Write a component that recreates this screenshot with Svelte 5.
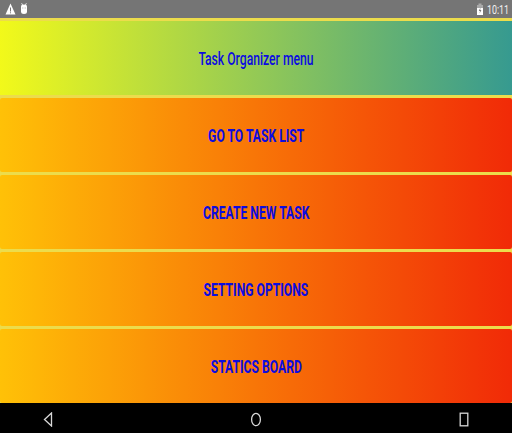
<script>
  const items = ['GO TO TASK LIST', 'CREATE NEW TASK', 'SETTING OPTIONS', 'STATICS BOARD'];
</script>

<div class="screen">
  <div class="status">
    <div class="status-left">
      <svg width="11" height="12" viewBox="0 0 11 12"><path d="M5.5 0.5 L10.5 11.5 H0.5 Z" fill="#fff" /><rect x="5" y="4.5" width="1" height="4" fill="#757575" /><rect x="5" y="9.3" width="1" height="1" fill="#757575" /></svg>
      <svg width="8" height="12" viewBox="0 0 8 12"><path d="M1 3.5 Q1 1.5 4 1.5 Q7 1.5 7 3.5 V8.5 Q7 11 4 11 Q1 11 1 8.5 Z" fill="#fff" /><path d="M1.6 0.2 L2.6 2 M6.4 0.2 L5.4 2" stroke="#fff" stroke-width="0.8" /><rect x="2.3" y="4.5" width="1" height="1" fill="#aaa" /><rect x="4.7" y="4.5" width="1" height="1" fill="#aaa" /></svg>
    </div>
    <div class="status-right">
      <svg width="6" height="12" viewBox="0 0 6 12"><rect x="0" y="2" width="6" height="10" fill="#fff" /><rect x="1.5" y="0.5" width="3" height="1.5" fill="#aaa" /><rect x="0" y="2" width="6" height="3" fill="#a8a8a8" /><path d="M3.4 4.5 L1.8 8 H3 L2.6 10.6 L4.4 7 H3.2 Z" fill="#757575" /></svg>
      <span class="time">10:11</span>
    </div>
  </div>

  <div class="menu">
    <div class="row header"><span>Task Organizer menu</span></div>
    {#each items as item}
      <button class="row action"><span>{item}</span></button>
    {/each}
  </div>

  <div class="nav">
    <svg width="10" height="15" viewBox="0 0 10 15"><path d="M8.5 1 L1.5 7.5 L8.5 14 Z" fill="none" stroke="#d8d8d8" stroke-width="1.3" /></svg>
    <svg width="12" height="15" viewBox="0 0 12 15"><ellipse cx="6" cy="7.5" rx="4.4" ry="6.2" fill="none" stroke="#d8d8d8" stroke-width="1.3" /></svg>
    <svg width="10" height="15" viewBox="0 0 10 15"><rect x="1.2" y="1.2" width="7.6" height="12.6" fill="none" stroke="#d8d8d8" stroke-width="1.3" /></svg>
  </div>
</div>

<style>
  :global(body) {
    margin: 0;
  }
  .screen {
    width: 512px;
    height: 433px;
    display: flex;
    flex-direction: column;
    overflow: hidden;
    font-family: Roboto, "Liberation Sans", sans-serif;
  }
  .status {
    height: 18px;
    flex: none;
    box-sizing: border-box;
    background: #757575;
    display: flex;
    justify-content: space-between;
    align-items: center;
    padding: 0 4px 0 5px;
  }
  .status-left,
  .status-right {
    display: flex;
    align-items: center;
    gap: 4px;
  }
  .time {
    color: #f2f2f2;
    font-size: 13px;
    display: inline-block;
    width: 21px;
    white-space: nowrap;
    transform: scaleX(0.68);
    transform-origin: left center;
  }
  .menu {
    flex: 1;
    display: flex;
    flex-direction: column;
    background: #ecdc4c;
    padding-top: 3px;
    gap: 3px;
  }
  .row {
    flex: 1;
    display: flex;
    align-items: center;
    justify-content: center;
    border: none;
    padding: 0;
    color: #0c0ce0;
    font-family: inherit;
    font-size: 19px;
    font-weight: 500;
  }
  .row span {
    display: inline-block;
    white-space: nowrap;
    transform: scaleX(0.64);
  }
  .header {
    background: linear-gradient(to right, #f2f91a, #369a90);
  }
  .action {
    background: linear-gradient(to right, #ffc107, #f12a07);
    font-weight: 700;
    border-radius: 2px;
  }
  .nav {
    height: 30px;
    flex: none;
    box-sizing: border-box;
    background: #000;
    display: flex;
    justify-content: space-between;
    align-items: center;
    padding: 2px 43px 0;
  }
</style>
